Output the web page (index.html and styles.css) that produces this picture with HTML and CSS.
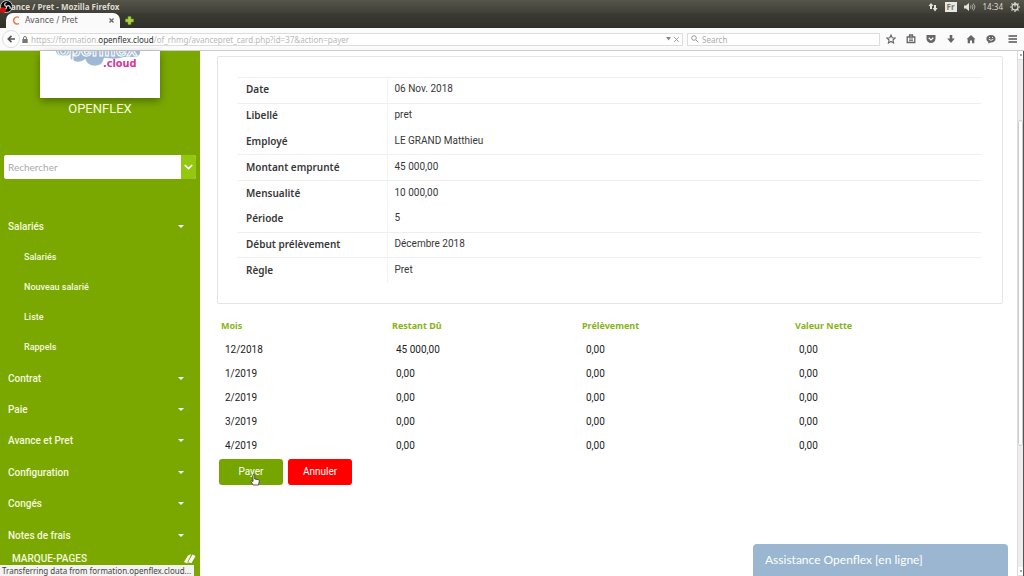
FILE: index.html
```html
<!DOCTYPE html>
<html lang="fr">
<head>
<meta charset="utf-8">
<title>Avance / Pret</title>
<link rel="stylesheet" href="styles.css">
</head>
<body>
<header class="sysbar">
  <svg class="recorder" width="13" height="13" viewBox="0 0 13 13"><circle cx="6.5" cy="6.5" r="6" fill="#080808" stroke="#c9c7c2"/><path d="M6.5 6.5C4 6 4 3 6.500 2.500M6.500 6.500C9 4.500 11 7 10 9M6.500 6.500C7 9 4 10.500 2.500 8.500" fill="none" stroke="#ddd" stroke-width="1.200"/><circle cx="3" cy="10" r="2.800" fill="#e80808"/></svg>
  <h1 class="window-title">ance / Pret - Mozilla Firefox</h1>
  <div class="tray">
    <svg width="10" height="10" viewBox="0 0 10 10" fill="#e4e2dc"><path d="M2 7V4H0.500L3 1l2.500 3H4v3zM6 3h2v3h1.500L7 9.500 4.700 6H6z"/></svg>
    <span class="lang">Fr</span>
    <svg width="12" height="10" viewBox="0 0 12 10"><path d="M0 3.500h2L5 1v8L2 6.500H0z" fill="#e4e2dc"/><path d="M6.500 3.500q1 1.500 0 3M8 2.500q2 2.500 0 5M9.500 1.500q3 3.500 0 7" fill="none" stroke="#aaa89f"/></svg>
    <span class="clock">14:34</span>
    <svg width="10" height="10" viewBox="0 0 10 10" fill="none" stroke="#dedcd5"><circle cx="5" cy="5" r="3" stroke-width="1.300"/><path d="M5 0v4.500M0 5h1.500M8.500 5H10M1.500 1.500l1 1M8.500 1.500l-1 1M1.500 8.500l1-1M8.500 8.500l-1-1M5 8.500V10" stroke-width="1.200"/></svg>
  </div>
</header>
<nav class="tabstrip">
  <div class="tab">
    <svg width="9" height="9" viewBox="0 0 9 9"><path d="M7 1.500A3.500 3.500 0 1 0 7 7.500" fill="none" stroke="#e0764a" stroke-width="1.400"/></svg>
    <span class="tab-title">Avance / Pret</span>
    <button class="bare" aria-label="Fermer l’onglet"><svg width="5" height="5" viewBox="0 0 5 5"><path d="M.5.5l4 4m0-4l-4 4" stroke="#666" stroke-width="1.300"/></svg></button>
  </div>
  <button class="bare new-tab" aria-label="Nouvel onglet"><svg width="9" height="9" viewBox="0 0 9 9"><path d="M3 .5h3V3h2.500v3H6v2.500H3V6H.5V3H3z" fill="#a6d43c" stroke="#6f9c1e" stroke-width=".6"/></svg></button>
</nav>
<div class="toolbar">
  <button class="back" aria-label="Retour"><svg width="8" height="8" viewBox="0 0 8 8"><path d="M4.500.8L1.300 4l3.200 3.200M1.500 4H8" fill="none" stroke="#555" stroke-width="1.700"/></svg></button>
  <div class="address">
    <svg width="6" height="7" viewBox="0 0 6 7"><path d="M1.500 3V2a1.500 1.500 0 0 1 3 0v1" fill="none" stroke="#777"/><path d="M.3 3h5.400v4H.3z" fill="#777"/></svg>
    <div class="url">https://formation.<b>openflex.cloud</b>/of_rhmg/avancepret_card.php?id=37&amp;action=payer</div>
    <svg width="5" height="4" viewBox="0 0 5 4"><path d="M0 0h5L2.500 3.500z" fill="#888"/></svg>
    <svg width="5" height="5" viewBox="0 0 5 5"><path d="M.3.3l4.400 4.400m0-4.400L.3 4.700" stroke="#999"/></svg>
  </div>
  <label class="finder">
    <svg width="8" height="8" viewBox="0 0 8 8" fill="none" stroke="#999"><circle cx="3" cy="3" r="2.300"/><path d="M4.800 4.800l2.700 2.700"/></svg>
    <input type="search" placeholder="Search" aria-label="Search">
  </label>
  <div class="actions">
    <button class="bare" aria-label="Favoris"><svg width="10" height="10" viewBox="0 0 10 10"><path d="M5 1l1.200 2.700 2.900.3L7 6l.6 3L5 7.500 2.400 9 3 6 .9 4l2.900-.3z" fill="none" stroke="#666" stroke-width="1.100"/></svg></button>
    <button class="bare" aria-label="Liste"><svg width="10" height="10" viewBox="0 0 10 10"><path d="M3.500 2.500V1h3v1.500M1.200 3h7.600v5.500H1.200z" fill="none" stroke="#666" stroke-width="1.300"/><path d="M3 5h4M3 6.700h4" stroke="#666"/></svg></button>
    <button class="bare" aria-label="Pocket"><svg width="10" height="10" viewBox="0 0 10 10"><path d="M.5 1h9v3.500a4.500 4.500 0 0 1-9 0z" fill="#666"/><path d="M2.700 3.800L5 6l2.300-2.200" fill="none" stroke="#fff" stroke-width="1.200"/></svg></button>
    <button class="bare" aria-label="Téléchargements"><svg width="10" height="10" viewBox="0 0 10 10"><path d="M3.700 1h2.600v3.500h2.500L5 9 1.200 4.500h2.500z" fill="#666"/></svg></button>
    <button class="bare" aria-label="Accueil"><svg width="10" height="10" viewBox="0 0 10 10"><path d="M5 1l4.500 4.300H8.300V9.200H6V6.500H4v2.700H1.700V5.300H.5z" fill="#666"/></svg></button>
    <button class="bare" aria-label="Discussion"><svg width="10" height="10" viewBox="0 0 10 10"><path d="M5 1c6 0 6 7.500 0 7.500L2 9.500l.3-1.600C-1 6 0 1 5 1z" fill="#666"/><path d="M2.700 5.300q2.300 2 4.600 0M3 3.500h1M6 3.500h1" fill="none" stroke="#fff" stroke-width=".9"/></svg></button>
    <button class="bare menu-button" aria-label="Menu"><svg width="10" height="10" viewBox="0 0 10 10"><path d="M.5 2h8.500M.5 5h8.500M.5 8h8.500" stroke="#555" stroke-width="1.500"/></svg></button>
  </div>
</div>
<div class="page">
  <aside class="sidebar">
    <div class="logo">
      <svg width="120" height="48" viewBox="0 0 120 48" role="img" aria-label="openflex.cloud">
        <path d="M15 0Q16 6 24 5q4 0 5-2 1 7 8 8 5 0 8-3 2 7 10 7 8 0 9-8 14 2 20-1l14 0q3-2 3-6z" fill="#9fb9d5"/>
        <text x="16" y="5" class="logo-name">openflex</text>
        <text x="63" y="16" class="logo-cloud">.cloud</text>
      </svg>
    </div>
    <h2 class="company">OPENFLEX</h2>
    <form class="search">
      <input type="text" placeholder="Rechercher" aria-label="Rechercher">
      <button type="button" aria-label="Options"><svg width="9" height="6" viewBox="0 0 9 6"><path d="M.8 1l3.700 3.500L8.200 1" fill="none" stroke="#fff" stroke-width="1.700"/></svg></button>
    </form>
    <nav class="menu">
      <a class="item" href="#">Salariés</a>
      <a class="subitem" href="#">Salariés</a>
      <a class="subitem" href="#">Nouveau salarié</a>
      <a class="subitem" href="#">Liste</a>
      <a class="subitem" href="#">Rappels</a>
      <a class="item" href="#">Contrat</a>
      <a class="item" href="#">Paie</a>
      <a class="item" href="#">Avance et Pret</a>
      <a class="item" href="#">Configuration</a>
      <a class="item" href="#">Congés</a>
      <a class="item" href="#">Notes de frais</a>
    </nav>
    <a class="bookmarks" href="#">MARQUE-PAGES
      <svg width="12" height="10" viewBox="0 0 12 10"><path d="M4 1.500L7 0 6 3 3.500 7.500v2L0 8zM8.500.5l3 1.500L7.500 9 4 8.500z" fill="#fff"/></svg>
    </a>
  </aside>
  <main class="content">
    <section class="card">
      <table class="details">
        <tr><th scope="row">Date</th><td>06 Nov. 2018</td></tr>
        <tr><th scope="row">Libellé</th><td>pret</td></tr>
        <tr class="plain"><th scope="row">Employé</th><td>LE GRAND Matthieu</td></tr>
        <tr><th scope="row">Montant emprunté</th><td>45 000,00</td></tr>
        <tr><th scope="row">Mensualité</th><td>10 000,00</td></tr>
        <tr class="plain"><th scope="row">Période</th><td>5</td></tr>
        <tr><th scope="row">Début prélèvement</th><td>Décembre 2018</td></tr>
        <tr><th scope="row">Règle</th><td>Pret</td></tr>
      </table>
    </section>
    <table class="schedule">
      <thead><tr><th class="month">Mois</th><th class="due">Restant Dû</th><th class="levy">Prélèvement</th><th>Valeur Nette</th></tr></thead>
      <tbody>
        <tr><td>12/2018</td><td>45 000,00</td><td>0,00</td><td>0,00</td></tr>
        <tr><td>1/2019</td><td>0,00</td><td>0,00</td><td>0,00</td></tr>
        <tr><td>2/2019</td><td>0,00</td><td>0,00</td><td>0,00</td></tr>
        <tr><td>3/2019</td><td>0,00</td><td>0,00</td><td>0,00</td></tr>
        <tr><td>4/2019</td><td>0,00</td><td>0,00</td><td>0,00</td></tr>
      </tbody>
    </table>
    <div class="buttons">
      <button class="btn pay">Payer
        <svg class="pointer" width="10" height="12" viewBox="0 0 10 12"><path d="M3 1.200q1-1 1.700 0V5l4 .8q.8.300.6 1.200L8.500 11H3.200L.8 7.500q.6-1.200 2.200 0z" fill="#fff" stroke="#333" stroke-width=".8"/></svg>
      </button>
      <button class="btn cancel">Annuler</button>
    </div>
  </main>
  <div class="scrollbar"><span class="arrow"></span><span class="thumb"></span><span class="arrow low"></span></div>
  <button class="assist">Assistance Openflex [en ligne]</button>
  <div class="status">Transferring data from formation.openflex.cloud...</div>
</div>
</body>
</html>
```

FILE: styles.css
```css
* { box-sizing: border-box; }
body {
  margin: 0;
  height: 100vh;
  display: flex;
  flex-direction: column;
  overflow: hidden;
  background: #fff;
  font-family: "Noto Sans", sans-serif;
  font-size: 10px;
  color: #383838;
}
button, input { font: inherit; margin: 0; padding: 0; }
svg { display: block; flex: none; }
a { color: inherit; text-decoration: none; }
.bare { border: 0; background: none; }

.sysbar {
  flex: none;
  height: 13px;
  display: flex;
  align-items: center;
  padding-right: 4px;
  background: linear-gradient(#56554a, #403f38);
  color: #dfdbd2;
}
.window-title { margin: 0; font: bold 8px/13px "Open Sans", sans-serif; }
.recorder { margin-right: -2px; }
.tray { margin-left: auto; display: flex; align-items: center; gap: 7px; }
.lang {
  padding: 0 2px;
  background: #e9e7e2;
  color: #77756c;
  font: bold 8px/10px "Open Sans", sans-serif;
}
.clock { font-size: 8px; line-height: 12px; }

.tabstrip {
  flex: none;
  height: 15px;
  display: flex;
  align-items: center;
  padding-left: 6px;
  gap: 5px;
  background: linear-gradient(#3b3a33, #302f29);
}
.tab {
  width: 114px;
  height: 15px;
  display: flex;
  align-items: center;
  gap: 4px;
  padding: 0 6px;
  border-radius: 7px 7px 0 0;
  background: #fafafa;
}
.tab-title { flex: 1; font: 8px/14px "DejaVu Sans", sans-serif; color: #555; }

.toolbar {
  flex: none;
  height: 23px;
  display: flex;
  align-items: center;
  padding: 0 6px 0 2px;
  background: #fbfbfb;
  border-bottom: 1px solid #ccc;
}
.back {
  width: 18px;
  height: 18px;
  display: grid;
  place-items: center;
  border: 1px solid #ddd;
  border-radius: 9px;
  background: #fff;
}
.address {
  flex: 1;
  height: 13px;
  display: flex;
  align-items: center;
  gap: 3px;
  padding: 0 3px 0 2px;
  border: 1px solid #ddd;
  border-left: 0;
  background: #fff;
}
.url { flex: 1; font-size: 8px; line-height: 11px; color: #b8b8b8; white-space: nowrap; }
.url b { font-weight: normal; color: #333; }
.finder {
  width: 193px;
  height: 13px;
  margin-left: 4px;
  display: flex;
  align-items: center;
  gap: 3px;
  padding-left: 3px;
  border: 1px solid #ddd;
  background: #fff;
}
.finder input { flex: 1; min-width: 0; border: 0; outline: 0; background: none; font-size: 8px; line-height: 11px; }
.finder input::placeholder { color: #aaa; opacity: 1; }
.actions { display: flex; gap: 10px; margin-left: 6px; }
.menu-button { margin-left: 2px; }

.page { position: relative; flex: 1; min-height: 0; display: flex; }
.sidebar {
  width: 200px;
  flex: none;
  display: flex;
  flex-direction: column;
  background: #7aa800;
  color: #f4f9df;
  font-family: Roboto, sans-serif;
}
.logo {
  width: 120px;
  margin: 0 auto;
  background: #fff;
  box-shadow: 0 3px 8px rgba(0, 0, 0, .35);
}
.logo svg { height: 47px; }
.logo-name { font: bold 20px "Liberation Sans", sans-serif; fill: #9fb9d5; stroke: #fff; stroke-width: 1; }
.logo-cloud { font: bold 10px "DejaVu Sans", sans-serif; fill: #d8369a; }
.company { margin: 3px 0 0; text-align: center; font-size: 13px; line-height: 16px; font-weight: 400; }
.search {
  display: flex;
  height: 24px;
  margin: 38px 4px 32px;
  border-radius: 3px;
  overflow: hidden;
  background: #fff;
}
.search input { flex: 1; min-width: 0; border: 0; outline: 0; padding: 0 4px; font-family: Lato, sans-serif; }
.search input::placeholder { color: #aaa; opacity: 1; }
.search button { width: 15px; display: grid; place-items: center; border: 0; background: #94c80f; }
.menu { flex: 1; display: flex; flex-direction: column; }
.item, .subitem { display: flex; align-items: center; font-weight: 500; }
.item { flex: 1; padding: 0 16px 0 8px; font-size: 10px; }
.item::after { content: ""; margin-left: auto; border: 3px solid transparent; border-top-color: #fff; border-bottom: 0; }
.subitem { height: 30px; padding-left: 24px; font-size: 9px; }
.bookmarks {
  display: flex;
  justify-content: space-between;
  align-items: center;
  padding: 0 4px 0 12px;
  margin-bottom: 9px;
  font-size: 10px;
  line-height: 16px;
  font-weight: 500;
}

.content { flex: 1; min-width: 0; padding: 5px 14px 0 17px; }
.card { padding: 20px 21px 20px 20px; border: 1px solid #e4e4e4; border-radius: 2px; }
.details { width: 100%; height: 206px; border-collapse: collapse; font-size: 10px; line-height: 14px; }
.details th, .details td { padding: 0 8px 2px; border-top: 1px solid #eee; text-align: left; }
.details td { padding-left: 7px; font-family: Roboto, sans-serif; }
.details th { width: 149px; border-right: 1px solid #f3f3f3; font-weight: 600; }
.details .plain th, .details .plain td { border-top-color: transparent; }

.schedule { width: 100%; margin-top: 9px; border-collapse: collapse; table-layout: fixed; color: #222; }
.schedule th { height: 24px; padding: 0 4px; text-align: left; font-size: 9px; color: #88b317; }
.schedule td { height: 24px; padding: 0 8px; font-family: Roboto, sans-serif; }
.month { width: 171px; }
.due { width: 190px; }
.levy { width: 213px; }

.buttons { display: flex; gap: 5px; margin-top: 2px; padding-left: 2px; }
.btn {
  position: relative;
  width: 64px;
  height: 26px;
  border: 0;
  border-radius: 3px;
  color: #fff;
  font: 10px/14px Roboto, sans-serif;
}
.pay { background: #76a500; }
.cancel { background: #f00; }
.pointer { position: absolute; left: 31px; top: 15px; }

.scrollbar {
  width: 7px;
  flex: none;
  display: flex;
  flex-direction: column;
  background: #efeeed;
  border-left: 1px solid #ddd;
  border-right: 1px solid #555;
}
.arrow { height: 9px; background: #fff; display: grid; place-items: center; border-bottom: 1px solid #ddd; }
.arrow::after { content: ""; border: 1px solid #aaa; }
.low { margin-top: auto; }
.thumb { height: 326px; margin-top: 60px; border: 1px solid #ccc; border-radius: 3px; background: #fff; }

.assist {
  position: absolute;
  right: 16px;
  bottom: 0;
  width: 255px;
  height: 32px;
  padding: 0 12px;
  border: 0;
  border-radius: 4px 4px 0 0;
  background: #9ab6d0;
  color: #fff;
  text-align: left;
  font: 12px/16px Lato, sans-serif;
}
.status {
  position: absolute;
  left: 0;
  bottom: 0;
  padding: 0 3px 0 2px;
  background: #f4f3f2;
  color: #444;
  font: 8px/11px "Noto Sans", sans-serif;
}
```
